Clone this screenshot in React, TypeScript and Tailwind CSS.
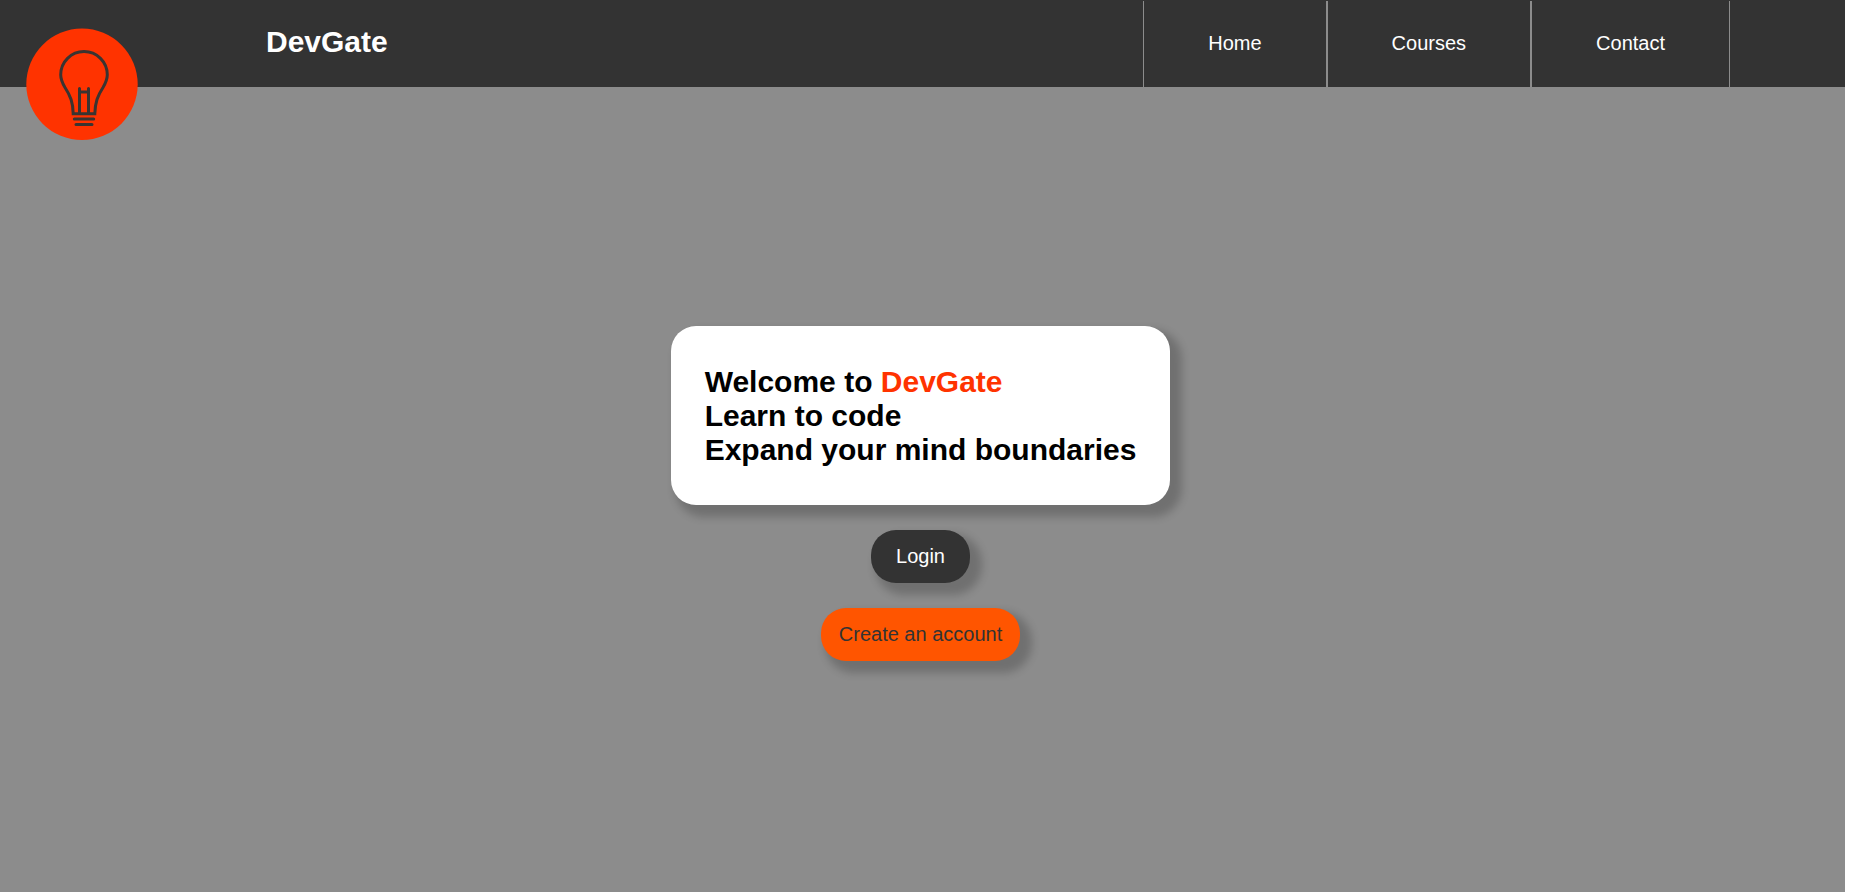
const links = ["Home", "Courses", "Contact"];

function Logo() {
  return (
    <svg viewBox="0 0 112 112" className="h-28 w-28" role="img" aria-label="DevGate logo">
      <circle cx="56" cy="56.3" r="55.7" fill="#ff3300" />
      <g fill="none" stroke="#3a3431" strokeWidth="3" strokeLinecap="round">
        <path d="M47.2 85.800C47 74 44.500 68 39 59.500C36 54.500 34.700 51 34.700 46.800A23.300 23.300 0 0 1 81.300 46.800C81.300 51 80 54.500 77 59.500C71.500 68 69.200 74 68.800 85.800Z" />
        <path d="M53.500 85V60.500M62.500 85V60.500M53.500 64H62.500" />
        <path d="M48.300 91H67.700M50 96.500H66" />
      </g>
    </svg>
  );
}

export default function App() {
  return (
    <div className="min-h-screen bg-white pr-[5px] font-['Liberation_Sans',Arial,sans-serif]">
      <div className="flex min-h-screen flex-col bg-[#8c8c8c]">
        <header className="relative flex h-[87px] items-stretch justify-between bg-[#333333] pr-[115px] pl-[266px]">
          <a href="#" className="absolute top-7 left-[26px]">
            <Logo />
          </a>
          <h1 className="self-center pb-1 text-[30px] leading-[34px] font-bold text-white">DevGate</h1>
          <nav className="flex items-stretch pt-px">
            {links.map((label) => (
              <a
                key={label}
                href="#"
                className="flex items-center border-x border-[#8c8c8c] px-16 pb-0.5 text-xl text-white"
              >
                {label}
              </a>
            ))}
          </nav>
        </header>
        <main className="flex flex-1 flex-col items-center gap-[25px] pt-[239px] pr-1">
          <section className="rounded-[25px] bg-white px-[34px] pt-[39px] pb-[38px] shadow-[8px_8px_8px_4px_rgba(0,0,0,0.2)]">
            <h2 className="text-[30px] leading-[34px] font-bold text-black">
              Welcome to <span className="text-[#ff3300]">DevGate</span>
              <br />
              Learn to code
              <br />
              Expand your mind boundaries
            </h2>
          </section>
          <button
            type="button"
            className="h-[53px] rounded-[25px] bg-[#333333] px-[25px] pb-0.5 text-xl text-white shadow-[8px_8px_8px_4px_rgba(0,0,0,0.2)]"
          >
            Login
          </button>
          <button
            type="button"
            className="h-[53px] rounded-[25px] bg-[#ff5500] px-[18px] pb-0.5 text-xl text-[#333333] shadow-[8px_8px_8px_4px_rgba(0,0,0,0.2)]"
          >
            Create an account
          </button>
        </main>
      </div>
    </div>
  );
}
